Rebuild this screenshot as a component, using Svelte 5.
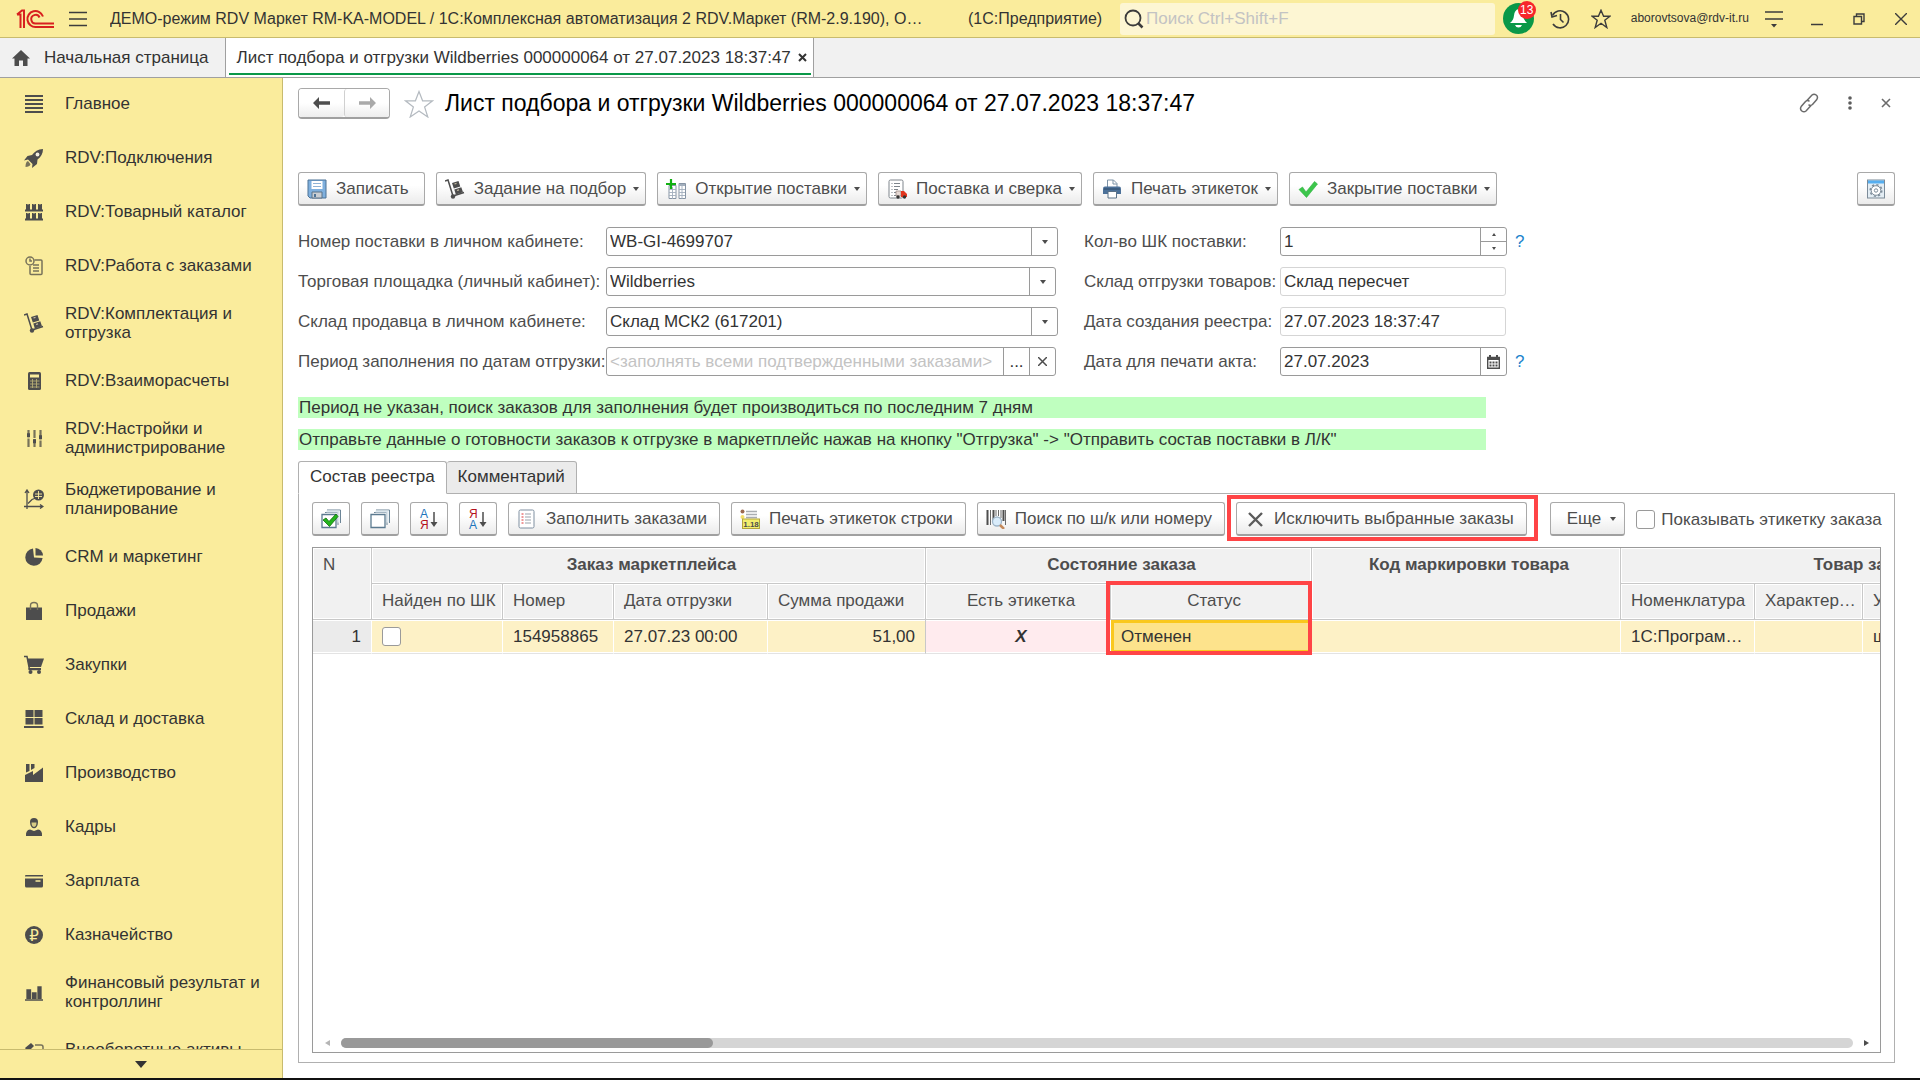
<script lang="ts">
  const sections = [
    { icon: 'lines', title: 'Главное' },
    { icon: 'rocket', title: 'RDV:Подключения' },
    { icon: 'catalog', title: 'RDV:Товарный каталог' },
    { icon: 'orders', title: 'RDV:Работа с заказами' },
    { icon: 'trolley', title: 'RDV:Комплектация и отгрузка' },
    { icon: 'calc', title: 'RDV:Взаиморасчеты' },
    { icon: 'sliders', title: 'RDV:Настройки и администрирование' },
    { icon: 'budget', title: 'Бюджетирование и планирование' },
    { icon: 'pie', title: 'CRM и маркетинг' },
    { icon: 'bag', title: 'Продажи' },
    { icon: 'basket', title: 'Закупки' },
    { icon: 'boxes', title: 'Склад и доставка' },
    { icon: 'factory', title: 'Производство' },
    { icon: 'person', title: 'Кадры' },
    { icon: 'wallet', title: 'Зарплата' },
    { icon: 'ruble', title: 'Казначейство' },
    { icon: 'bars', title: 'Финансовый результат и контроллинг' },
    { icon: 'assets', title: 'Внеоборотные активы' },
  ]

  const commands = [
    { icon: 'save', title: 'Записать', menu: false },
    { icon: 'trolley', title: 'Задание на подбор', menu: true },
    { icon: 'open', title: 'Открытие поставки', menu: true },
    { icon: 'delivery', title: 'Поставка и сверка', menu: true },
    { icon: 'printer', title: 'Печать этикеток', menu: true },
    { icon: 'check', title: 'Закрытие поставки', menu: true },
  ]

  const listTools = [
    { icon: 'checkAll', title: 'Установить флажки' },
    { icon: 'uncheckAll', title: 'Снять флажки' },
    { icon: 'sortAsc', title: 'Сортировать по возрастанию' },
    { icon: 'sortDesc', title: 'Сортировать по убыванию' },
  ]

  const listCommands = [
    { icon: 'fill', title: 'Заполнить заказами' },
    { icon: 'label', title: 'Печать этикеток строки' },
    { icon: 'barcode', title: 'Поиск по ш/к или номеру' },
  ]

  // All icons share a 20x20 canvas
  const icons: Record<string, string> = {
    lines: '<path d="M1 2h18M1 6h18M1 10h18M1 14h18M1 18h18" stroke="#4d4d4d" stroke-width="1.800"/>',
    rocket:
      '<path d="M19 1c-5 .3-8.500 2.500-11 6L3.500 8 0 12.500l4-1 4.500 4.500-.500 4 5-4 .5-4.500C17 9 19 5.500 19 1z" fill="#4d4d4d"/><circle cx="13.500" cy="6.500" r="1.900" fill="#f4efe0"/><path d="M4 13c-2 .8-2.500 3-2.500 6 2.600-.3 4.500-1 5-2.800z" fill="#77725a"/>',
    catalog:
      '<path d="M2 2h4v6H2zM8 2h4v6H8zM14 2h4v6h-4zM2 11h4v6H2zM8 11h4v6H8zM14 11h4v6h-4z" fill="#4d4d4d"/><path d="M1 8.500h18M1 17.500h18" stroke="#4d4d4d" stroke-width="1.800"/><path d="M3.500 2.500h1M9.500 2.500h1M15.500 2.500h1M3.500 11.500h1M9.500 11.500h1M15.500 11.500h1" stroke="#c4ba80"/>',
    orders:
      '<g fill="none" stroke="#77725a" stroke-width="1.500"><path d="M10.500 4H17q1 0 1 1v12.500q0 1-1 1H7q-1 0-1-1V10"/><circle cx="6" cy="5" r="4"/><path d="M6 2.500V5H8M9 9h6M9 12h6M9 15h6"/></g>',
    trolley:
      '<path d="M0 2l3-1 5 16 11-3.500" fill="none" stroke="#4d4d4d" stroke-width="1.500"/><circle cx="8" cy="17.500" r="2.200" fill="#4d4d4d"/><path d="M7 4l6.500-2 1.800 5.500-6.500 2zM9.300 10.500l7-2.200 1.700 5-7.200 2.300z" fill="#4d4d4d"/><path d="M9.500 5l2-.6M12 11.500l2-.6" stroke="#c4baa0" stroke-width="1.300"/>',
    calc:
      '<rect x="4" y="1" width="13" height="18" rx="1.500" fill="#4d4d4d"/><path d="M6 3.500h9v3H6z" fill="#faec9c"/><path d="M6 10h9.500M6 13h9.500M6 16h9.500M8.500 8v9M12.500 8v9" stroke="#b5ab74" stroke-width=".9"/>',
    sliders:
      '<path d="M4.500 2v17M10.500 2v17M16.500 2v17" stroke="#77725a" stroke-width="2.200"/><path d="M3 6.500h3M9 12.500h3M15 8.500h3M3 8h3M9 14h3M15 10h3" stroke="#4d4d4d" stroke-width="2.500"/><path d="M3 10h3M9 10.500h3M15 12h3" stroke="#faec9c"/>',
    budget:
      '<path d="M3 20V2M1 4l2-3 2 3M0 17.500h18M16 15.500l3 2-3 2" fill="none" stroke="#4d4d4d" stroke-width="1.300"/><path d="M4 14.500l4-4 5-2" fill="none" stroke="#4d4d4d" stroke-width="1.300"/><circle cx="14.500" cy="6" r="5.500" fill="#4d4d4d"/><path d="M14.500 2v8M11 5h7M11 7.500h7" stroke="#faec9c" stroke-width=".9"/>',
    pie: '<path d="M9 1.500a8.700 8.700 0 1 0 9.600 9.600L10 10.500z" fill="#4d4d4d"/><path d="M11.500 1v7.500H19A8 8 0 0 0 11.500 1z" fill="#4d4d4d"/>',
    bag: '<path d="M2 6.500h16V19H2z" fill="#4d4d4d"/><path d="M6.500 9V4.500q0-3 3.500-3t3.500 3V9" fill="none" stroke="#77725a" stroke-width="1.400"/>',
    basket:
      '<path d="M0 1.500h3L5.500 14.500h11" fill="none" stroke="#4d4d4d" stroke-width="1.500"/><path d="M3 3.500h17l-3 8.500H5z" fill="#4d4d4d"/><path d="M4.500 14h12.500" stroke="#4d4d4d" stroke-width="2"/><circle cx="6.500" cy="17" r="2" fill="#4d4d4d"/><circle cx="15" cy="17" r="2" fill="#4d4d4d"/>',
    boxes:
      '<path d="M1.500 1h8v7h-8zM10.500 1h8v7h-8zM1.500 9h8v6.500h-8zM10.500 9h8v6.500h-8zM0 17h19.500v2H0z" fill="#4d4d4d"/>',
    factory:
      '<path d="M1 19V12l8-4v4l10-7.500V19z" fill="#4d4d4d"/><path d="M2 1h3.500v7L2 9.500zM7 1h3.500v4L7 7z" fill="#4d4d4d"/>',
    person:
      '<path d="M6 5q0-4 4-4t4 4q0 3-1.500 5-1 1.300-2.500 1.300T7.500 10Q6 8 6 5z" fill="#4d4d4d"/><path d="M7.500 5.500h5q0 4-2.500 4.500-2.500-.5-2.500-4.500z" fill="#d8cc86"/><path d="M2 19q-.5-6 4-6.500L10 14l4-1.500q4.500.5 4 6.500z" fill="#4d4d4d"/>',
    wallet:
      '<path d="M1 5q0-1 1-1h17v1.500H1zM1 7.500h18V15q0 1.500-1.500 1.500h-15Q1 16.500 1 15z" fill="#4d4d4d"/><path d="M11.500 10h5" stroke="#faec9c" stroke-width="1.500"/>',
    ruble:
      '<circle cx="10" cy="10" r="9" fill="#4d4d4d"/><text x="10" y="15.500" text-anchor="middle" font-family="DejaVu Sans" font-size="15" fill="#faec9c">₽</text>',
    bars: '<path d="M1 18h18M3 17V8h3.500v9M8.500 17v-6H12v6M14 17V5h3v12" fill="#4d4d4d" stroke="#4d4d4d" stroke-width="1.300"/>',
    assets:
      '<path d="M1 8l6-5 3 3-6 6z" fill="#4d4d4d"/><path d="M11 5h6q2 0 2 2v10H9v-8" fill="none" stroke="#77725a" stroke-width="1.500"/>',
    save: '<path d="M1 1h18v18H3l-2-2z" fill="#7fb0de" stroke="#4d7396"/><path d="M4.500 2h11v8h-11z" fill="#fff"/><path d="M6 4.500h8M6 7.500h8" stroke="#8fb3d6" stroke-width="1"/><path d="M5 13h10v6H5z" fill="#c9ced3" stroke="#5b7288"/><path d="M7 15h2v3H7z" fill="#4d7396"/>',
    open: '<g fill="#fff" stroke="#8795a5"><path d="M3 6.500h7v13H3zM13 4.500h6.500v15H13z"/></g><path d="M3 10.500h7M3 13.500h7M3 16.500h7M13 10.500h6M13 13.500h6M13 16.500h6M6.500 8v12M16 7v13" stroke="#a3afbd" stroke-width=".9" fill="none"/><path d="M13 5h6v2h-6z" fill="#a3afbd"/><path d="M5 0v10M0 5h10" stroke="#12b012" stroke-width="2.200"/>',
    delivery:
      '<rect x="2" y="1" width="14" height="18" rx="1.500" fill="#fff" stroke="#7e858c"/><path d="M4.500 4.500h1M7 4.500h6M4.500 7.500h1M7 7.500h6M4.500 10.500h1M7 10.500h4M4.500 13.500h1M7 13.500h2M4.500 16.500h1M7 16.500h2" stroke="#7e858c"/><path d="M9 12h5v5H9z" fill="#e6d9d4" stroke="#93827c" stroke-width=".7"/><path d="M14 12h3l3 3v3h-6z" fill="#e2351e"/><circle cx="11" cy="18" r="1.700" fill="#333"/><circle cx="17.500" cy="18" r="1.700" fill="#333"/>',
    printer:
      '<path d="M5.500 9V1h6l3.500 3.500V9" fill="#fff" stroke="#7d92a6"/><path d="M11 1v4h4" fill="none" stroke="#7d92a6"/><path d="M3 7.500h14q2 0 2 2V15H1V9.500q0-2 2-2z" fill="#4c7199"/><path d="M2 10h16" stroke="#2c4a69"/><path d="M6 12.500h8.500V19H6z" fill="#fff" stroke="#5b7288"/>',
    check: '<path d="M1 10.500L4.500 8l3.500 5L16.500 2.500 19.500 5 8.500 18.500z" fill="#3cc64b" stroke="#2fb141" stroke-width=".6"/>',
    form: '<rect x="1.500" y="1" width="17" height="18" fill="#e3edf4" stroke="#7c8b98"/><path d="M2 1.500h16v3H2z" fill="#55aef0"/><circle cx="10" cy="11.500" r="5.800" fill="none" stroke="#7c8b98" stroke-width="1.500" stroke-dasharray="2.200 2.300"/><circle cx="10" cy="11.500" r="4.800" fill="#fff" stroke="#7c8b98"/><circle cx="10" cy="11.500" r="1.700" fill="none" stroke="#7c8b98"/>',
    checkAll:
      '<path d="M6 1h13.500v13M4 3.500h13V16" fill="none" stroke="#6c8597"/><path d="M5.500 1.500h13v12h-2v-10h-11z" fill="#dbe5ec"/><path d="M1 5.500h14v13H1z" fill="#fff" stroke="#5b7a90" stroke-width="1.300"/><path d="M2 11l3-2 3 3.500L15 5l2 2.500-8.500 10z" fill="#23b51c" stroke="#0e6b0c" stroke-width=".8"/>',
    uncheckAll:
      '<path d="M6 1h13.500v13M4 3.500h13V16" fill="none" stroke="#6c8597"/><path d="M5.500 1.500h13v12h-2v-10h-11z" fill="#dbe5ec"/><path d="M1 5.500h14v13H1z" fill="#fff" stroke="#5b7a90" stroke-width="1.300"/>',
    sortAsc:
      '<text x="1" y="9" font-family="Liberation Sans" font-size="12" fill="#1c75bc">А</text><text x="1" y="20" font-family="Liberation Sans" font-size="12" fill="#b5121b">Я</text><path d="M15 3v12" stroke="#4d4d4d" stroke-width="1.500"/><path d="M11.500 13h7L15 18z" fill="#4d4d4d"/>',
    sortDesc:
      '<text x="1" y="9" font-family="Liberation Sans" font-size="12" fill="#b5121b">Я</text><text x="1" y="20" font-family="Liberation Sans" font-size="12" fill="#1c75bc">А</text><path d="M15 3v12" stroke="#4d4d4d" stroke-width="1.500"/><path d="M11.500 13h7L15 18z" fill="#4d4d4d"/>',
    fill: '<rect x="2" y="1" width="15" height="18" rx="1.500" fill="#fff" stroke="#7e8fa0"/><path d="M4.500 5h2M4.500 8h2M4.500 11h2M4.500 14h2" stroke="#d33"/><path d="M8 5h6M8 8h6M8 11h6M8 14h6" stroke="#9aa3ab"/>',
    label:
      '<circle cx="2.500" cy="2.500" r="2" fill="#9c6a50"/><circle cx="2.500" cy="8" r="2" fill="#f5df6a"/><path d="M6 2.500h11M6 5.500h11M6 8.500h11" stroke="#a9adb1" stroke-width="1.400"/><rect x="2.500" y="10" width="17" height="9.500" fill="#f2ee6e" stroke="#b3a53c"/><text x="11" y="18" text-anchor="middle" font-family="Liberation Sans" font-weight="bold" font-size="8" fill="#4d4d4d">1.18</text>',
    barcode:
      '<path d="M1.500 1v15M7.500 1v11M17.500 1v11" stroke="#4d4d4d" stroke-width="2"/><path d="M4.500 1v15M10 1v6M12.500 1v6M15 1v8M19.500 1v15" stroke="#6b6b6b" stroke-width="1"/><circle cx="11" cy="12.500" r="4.500" fill="#d9ecfb" stroke="#9fb6c9" stroke-width="1.300"/><path d="M14 16l4 4" stroke="#c58a5b" stroke-width="2.500"/>',
    cross: '<path d="M4 4l13 13M17 4L4 17" stroke="#5c5c5c" stroke-width="2.400"/>',
  }

  let supply = $state('WB-GI-4699707')
  let market = $state('Wildberries')
  let warehouse = $state('Склад МСК2 (617201)')
  let period = $state('')
  let count = $state('1')
  let actDate = $state('27.07.2023')
  let found = $state(false)
  let showLabel = $state(false)
</script>

{#snippet icon(name: string)}
  <svg class="icon" viewBox="0 0 20 20" width="20" height="20" aria-hidden="true">{@html icons[name]}</svg>
{/snippet}

<div class="app">
  <header class="titlebar">
    <svg class="logo" viewBox="0 0 38 20" width="38" height="20" fill="none" stroke="#d8201f" stroke-width="2" aria-hidden="true">
      <path d="M1 5.500h3.500V19M1 5.500L6 1.500h2V19" />
      <path d="M27 7.500A8 8 0 1 0 20 18h18" />
      <path d="M23.500 8.500A4.300 4.300 0 1 0 20 14.500h18" />
    </svg>
    <button class="flat" aria-label="Главное меню">
      <svg width="18" height="16" viewBox="0 0 18 16" stroke="#3c3c3c" stroke-width="1.500"><path d="M0 1.500h18M0 8h18M0 14.500h18" /></svg>
    </button>
    <span class="app-title">ДЕМО-режим RDV Маркет RM-KA-MODEL / 1С:Комплексная автоматизация 2 RDV.Маркет (RM-2.9.190), О…</span>
    <span class="platform">(1С:Предприятие)</span>
    <label class="search">
      <svg width="20" height="20" viewBox="0 0 20 20" fill="none" stroke="#3c3c3c" stroke-width="1.800" aria-hidden="true"><circle cx="9" cy="9" r="7.500" /><path d="M14.500 14.500l4 4" stroke-width="2.500" /></svg>
      <input type="search" placeholder="Поиск Ctrl+Shift+F" aria-label="Поиск" />
    </label>
    <button class="flat bell" aria-label="Уведомления">
      <svg width="31" height="31" viewBox="0 0 31 31" aria-hidden="true">
        <circle cx="15.500" cy="15.500" r="15.500" fill="#0a9848" />
        <path d="M15.500 6q-4 1-4.500 6.500-.4 4.500-4 7.500h17q-3.600-3-4-7.500Q19.500 7 15.500 6z" fill="#fff" />
        <path d="M12 22h7q-1 2.500-3.500 2.500T12 22z" fill="#fff" />
      </svg>
      <span class="badge">13</span>
    </button>
    <button class="flat history" aria-label="История">
      <svg width="20" height="20" viewBox="0 0 20 20" fill="none" stroke="#3c3c3c" stroke-width="1.600"><path d="M2.500 6.500A8.500 8.500 0 1 1 3 15" /><path d="M1 3l1 5 5-1.500M10.500 5v5.500l3 3" /></svg>
    </button>
    <button class="flat favorites" aria-label="Избранное">
      <svg width="20" height="20" viewBox="0 0 20 20" fill="none" stroke="#3c3c3c" stroke-width="1.400"><path d="M10 1.200l2.600 6H19l-5.200 4.100 2 7.200L10 14.300l-5.800 4.200 2-7.200L1 7.200h6.400z" /></svg>
    </button>
    <span class="user">aborovtsova@rdv-it.ru</span>
    <button class="flat" aria-label="Настройки">
      <svg width="18" height="18" viewBox="0 0 18 18" stroke="#3c3c3c" stroke-width="1.500"><path d="M0 2h18M0 9h18" /><path d="M6 14h6l-3 3.500z" fill="#3c3c3c" stroke="none" /></svg>
    </button>
    <div class="window-buttons">
      <button class="flat" aria-label="Свернуть"><svg width="12" height="14" viewBox="0 0 12 14" stroke="#3c3c3c" stroke-width="1.500"><path d="M0 12.500h12" /></svg></button>
      <button class="flat" aria-label="Восстановить"><svg width="12" height="12" viewBox="0 0 12 12" fill="none" stroke="#3c3c3c" stroke-width="1.400"><path d="M1 3.500h7.500V11H1zM3.500 3V1H11v7.500H9" /></svg></button>
      <button class="flat" aria-label="Закрыть"><svg width="12" height="12" viewBox="0 0 12 12" stroke="#3c3c3c" stroke-width="1.400"><path d="M0 0l12 12M12 0L0 12" /></svg></button>
    </div>
  </header>

  <nav class="tabs" aria-label="Открытые окна">
    <a class="tab home" href="#home">
      <svg width="18" height="16" viewBox="0 0 18 16" fill="#4d4d4d" aria-hidden="true"><path d="M9 0L0 8.500h2.500V16H7v-5.500h4V16h4.500V8.500H18z" /></svg>
      Начальная страница
    </a>
    <div class="tab current">
      <a href="#list">Лист подбора и отгрузки Wildberries 000000064 от 27.07.2023 18:37:47</a>
      <button class="flat" aria-label="Закрыть вкладку"><svg width="9" height="9" viewBox="0 0 9 9" stroke="#333" stroke-width="2"><path d="M1 1l7 7M8 1L1 8" /></svg></button>
    </div>
  </nav>

  <div class="body">
    <aside class="sidebar">
      <ul>
        {#each sections as section}
          <li><a href="#section">{@render icon(section.icon)}<span>{section.title}</span></a></li>
        {/each}
      </ul>
      <button class="more" aria-label="Прокрутить вниз"><svg width="12" height="7" viewBox="0 0 12 7" fill="#333"><path d="M0 0h12L6 7z" /></svg></button>
    </aside>

    <main>
      <div class="heading">
        <div class="history-nav">
          <button aria-label="Назад"><svg width="17" height="12" viewBox="0 0 17 12" fill="#4d4d4d"><path d="M0 6l6-6v4.300h11v3.400H6V12z" /></svg></button>
          <button aria-label="Вперед"><svg width="17" height="12" viewBox="0 0 17 12" fill="#a9a9a9"><path d="M17 6l-6-6v4.300H0v3.400h11V12z" /></svg></button>
        </div>
        <button class="flat star" aria-label="Добавить в избранное">
          <svg width="30" height="28" viewBox="0 0 30 28" fill="#fff" stroke="#b4bac0" stroke-width="1.200"><path d="M15 1.500l3.600 9.300h10L20.600 17l3.200 10L15 21l-8.800 6 3.200-10-8-6.200h10z" /></svg>
        </button>
        <h1>Лист подбора и отгрузки Wildberries 000000064 от 27.07.2023 18:37:47</h1>
        <div class="heading-actions">
          <button class="flat" aria-label="Получить ссылку"><svg width="20" height="20" viewBox="0 0 20 20" fill="none" stroke="#6b6b6b" stroke-width="1.500"><path d="M8 7.500l5-5.500q2-1.700 4.200 0t.6 4.500l-4.300 5q-2 1.700-4 .2" /><path d="M12 12.500l-5 5.500q-2 1.700-4.200 0t-.6-4.500l4.300-5q2-1.700 4-.2" /></svg></button>
          <button class="flat dots" aria-label="Еще"><svg width="4" height="14" viewBox="0 0 4 14" fill="#5c5c5c"><circle cx="2" cy="2" r="1.800" /><circle cx="2" cy="7" r="1.800" /><circle cx="2" cy="12" r="1.800" /></svg></button>
          <button class="flat" aria-label="Закрыть"><svg width="10" height="10" viewBox="0 0 10 10" stroke="#6b6b6b" stroke-width="1.600"><path d="M1 1l8 8M9 1L1 9" /></svg></button>
        </div>
      </div>

      <div class="toolbar">
        {#each commands as command}
          <button class="btn">
            {@render icon(command.icon)}
            <span>{command.title}</span>
            {#if command.menu}<i class="caret"></i>{/if}
          </button>
        {/each}
        <button class="btn square last" aria-label="Настройка формы">{@render icon('form')}</button>
      </div>

      <form class="fields">
        <label for="supply">Номер поставки в личном кабинете:</label>
        <div class="field">
          <select id="supply" bind:value={supply}><option>WB-GI-4699707</option></select>
          <span class="part"><i class="caret"></i></span>
        </div>
        <label for="count">Кол-во ШК поставки:</label>
        <div class="field">
          <input id="count" type="text" inputmode="numeric" bind:value={count} />
          <span class="spin">
            <button type="button" aria-label="Увеличить" onclick={() => (count = String(+count + 1))}><i class="caret up"></i></button>
            <button type="button" aria-label="Уменьшить" onclick={() => (count = String(+count - 1))}><i class="caret"></i></button>
          </span>
        </div>
        <a class="help" href="#help">?</a>

        <label for="market">Торговая площадка (личный кабинет):</label>
        <div class="field short">
          <select id="market" bind:value={market}><option>Wildberries</option></select>
          <span class="part"><i class="caret"></i></span>
        </div>
        <label for="stock">Склад отгрузки товаров:</label>
        <div class="field readonly"><input id="stock" type="text" value="Склад пересчет" readonly /></div>
        <span></span>

        <label for="warehouse">Склад продавца в личном кабинете:</label>
        <div class="field">
          <select id="warehouse" bind:value={warehouse}><option>Склад МСК2 (617201)</option></select>
          <span class="part"><i class="caret"></i></span>
        </div>
        <label for="created">Дата создания реестра:</label>
        <div class="field readonly"><input id="created" type="text" value="27.07.2023 18:37:47" readonly /></div>
        <span></span>

        <label for="period">Период заполнения по датам отгрузки:</label>
        <div class="field short">
          <input id="period" type="text" placeholder="<заполнять всеми подтвержденными заказами>" bind:value={period} />
          <button type="button" class="part" aria-label="Выбрать">...</button>
          <button type="button" class="part" aria-label="Очистить" onclick={() => (period = '')}>
            <svg width="9" height="9" viewBox="0 0 9 9" stroke="#4d4d4d" stroke-width="1.500"><path d="M0 0l9 9M9 0L0 9" /></svg>
          </button>
        </div>
        <label for="act-date">Дата для печати акта:</label>
        <div class="field">
          <input id="act-date" type="text" bind:value={actDate} />
          <button type="button" class="part" aria-label="Выбрать дату">
            <svg width="13" height="14" viewBox="0 0 13 14"><path d="M.7 2.500h11.600v10.800H.7z" fill="none" stroke="#4d4d4d" stroke-width="1.400" /><path d="M0 2h13v3H0zM2 0h2v3H2zM9 0h2v3H9z" fill="#4d4d4d" /><path d="M2.500 7.500h8M2.500 10.500h8" stroke="#4d4d4d" stroke-width="1.800" stroke-dasharray="2 1" /></svg>
          </button>
        </div>
        <a class="help" href="#help">?</a>
      </form>

      <div class="notes">
        <p>Период не указан, поиск заказов для заполнения будет производиться по последним 7 дням</p>
        <p>Отправьте данные о готовности заказов к отгрузке в маркетплейс нажав на кнопку "Отгрузка" -&gt; "Отправить состав поставки в Л/К"</p>
      </div>

      <div class="pages" role="tablist">
        <button class="page active" role="tab" aria-selected="true">Состав реестра</button>
        <button class="page" role="tab" aria-selected="false">Комментарий</button>
      </div>

      <section class="panel">
        <div class="toolbar list">
          {#each listTools as tool}
            <button class="btn square" aria-label={tool.title}>{@render icon(tool.icon)}</button>
          {/each}
          {#each listCommands as command}
            <button class="btn">{@render icon(command.icon)}<span>{command.title}</span></button>
          {/each}
          <div class="marked">
            <button class="btn">{@render icon('cross')}<span>Исключить выбранные заказы</span></button>
          </div>
          <button class="btn else"><span>Еще</span><i class="caret"></i></button>
          <label class="check"><input type="checkbox" bind:checked={showLabel} />Показывать этикетку заказа</label>
        </div>

        <div class="grid">
          <div class="rows">
            <table>
              <colgroup>
                <col style:width="59px" />
                <col style:width="131px" />
                <col style:width="111px" />
                <col style:width="154px" />
                <col style:width="158px" />
                <col style:width="185px" />
                <col style:width="201px" />
                <col style:width="309px" />
                <col style:width="134px" />
                <col style:width="108px" />
                <col style:width="246px" />
              </colgroup>
              <thead>
                <tr>
                  <th class="top" rowspan="2">N</th>
                  <th class="group" colspan="4">Заказ маркетплейса</th>
                  <th class="group" colspan="2">Состояние заказа</th>
                  <th class="group top" rowspan="2">Код маркировки товара</th>
                  <th class="group" colspan="3">Товар заказа</th>
                </tr>
                <tr>
                  <th>Найден по ШК</th>
                  <th>Номер</th>
                  <th>Дата отгрузки</th>
                  <th>Сумма продажи</th>
                  <th class="center">Есть этикетка</th>
                  <th class="center status">Статус</th>
                  <th>Номенклатура</th>
                  <th>Характер…</th>
                  <th>Упаковка</th>
                </tr>
              </thead>
              <tbody>
                <tr>
                  <td class="number">1</td>
                  <td><input type="checkbox" bind:checked={found} aria-label="Найден по ШК" /></td>
                  <td>154958865</td>
                  <td>27.07.23 00:00</td>
                  <td class="sum">51,00</td>
                  <td class="missing">X</td>
                  <td class="selected">Отменен</td>
                  <td></td>
                  <td>1С:Програм…</td>
                  <td></td>
                  <td>шт</td>
                </tr>
              </tbody>
            </table>
          </div>
          <div class="scroll">
            <svg width="5" height="6" viewBox="0 0 5 6" fill="#b5b5b5" aria-hidden="true"><path d="M5 0v6L0 3z" /></svg>
            <div class="track"><div class="thumb"></div></div>
            <svg width="5" height="6" viewBox="0 0 5 6" fill="#4d4d4d" aria-hidden="true"><path d="M0 0v6l5-3z" /></svg>
          </div>
        </div>
      </section>
    </main>
  </div>
  <footer></footer>
</div>

<style>
  :global(body) {
    margin: 0;
  }

  .app {
    background: #fff;
    color: #333;
    display: flex;
    flex-direction: column;
    font: 17px/19px 'Liberation Sans', Arial, sans-serif;
    height: 100vh;
    overflow: hidden;
  }

  .app *,
  .app *::after {
    box-sizing: border-box;
  }

  button,
  input,
  select {
    color: inherit;
    font: inherit;
    margin: 0;
  }

  button {
    cursor: pointer;
  }

  a {
    color: inherit;
    text-decoration: none;
  }

  svg {
    display: block;
    flex: none;
  }

  .flat {
    background: none;
    border: none;
    flex: none;
    padding: 0;
  }

  .titlebar {
    align-items: center;
    background: #faec9c;
    border-bottom: 1px solid #c8bb6e;
    display: flex;
    flex: none;
    height: 38px;
    padding: 0 13px 0 16px;
  }

  .logo {
    margin-right: 15px;
  }

  .app-title,
  .platform {
    font-size: 16px;
    white-space: nowrap;
  }

  .app-title {
    flex: 0 1 838px;
    margin-left: 23px;
    overflow: hidden;
    text-overflow: ellipsis;
  }

  .platform {
    flex: 0 0 140px;
    margin: 0 12px 0 20px;
  }

  .search {
    align-items: center;
    background: #fdf6d3;
    border-radius: 3px;
    display: flex;
    flex: 1;
    height: 32px;
    padding: 0 4px;
  }

  .search input {
    background: none;
    border: none;
    flex: 1;
    min-width: 0;
    outline: none;
    padding: 0 2px;
  }

  .search input::placeholder,
  .field input::placeholder {
    color: #c3c3c3;
    opacity: 1;
  }

  .bell {
    margin-left: 8px;
    position: relative;
  }

  .badge {
    background: #f7262b;
    border-radius: 9px;
    color: #fff;
    font-size: 12px;
    height: 18px;
    line-height: 18px;
    position: absolute;
    right: -2px;
    text-align: center;
    top: -2px;
    width: 18px;
  }

  .history {
    margin-left: 16px;
  }

  .favorites {
    margin-left: 21px;
  }

  .user {
    font-size: 12px;
    margin: 0 16px 0 20px;
  }

  .window-buttons {
    align-items: center;
    display: flex;
    gap: 30px;
    margin-left: 28px;
  }

  .tabs {
    background: #f1f1f1;
    border-bottom: 1px solid #a0a0a0;
    display: flex;
    flex: none;
    height: 40px;
  }

  .tab {
    align-items: center;
    border-right: 1px solid #a0a0a0;
    display: flex;
    white-space: nowrap;
  }

  .home {
    gap: 14px;
    padding: 0 16px 0 12px;
  }

  .current {
    background: #fff;
    gap: 7px;
    padding: 0 6px 0 11px;
    position: relative;
  }

  .current::after {
    background: #0a9848;
    bottom: 2px;
    content: '';
    height: 2px;
    left: 3px;
    position: absolute;
    right: 2px;
  }

  .body {
    display: flex;
    flex: 1;
    min-height: 0;
  }

  .sidebar {
    background: #faec9c;
    border-right: 1px solid #c8bb6e;
    display: flex;
    flex: none;
    flex-direction: column;
    width: 283px;
  }

  .sidebar ul {
    flex: 1;
    list-style: none;
    margin: 0;
    min-height: 0;
    overflow: hidden;
    padding: 0;
  }

  .sidebar a {
    align-items: center;
    display: flex;
    gap: 21px;
    min-height: 54px;
    padding: 10px 16px 13px 24px;
  }

  .more {
    align-items: center;
    background: none;
    border: none;
    border-top: 1px solid #c8bb6e;
    display: flex;
    flex: none;
    height: 29px;
    justify-content: center;
  }

  main {
    display: flex;
    flex: 1;
    flex-direction: column;
    min-width: 0;
    padding: 10px 25px 15px 15px;
  }

  .heading {
    align-items: center;
    display: flex;
    height: 31px;
  }

  .history-nav {
    border: 1px solid #a9a9a9;
    border-bottom: 2px solid #a0a0a0;
    border-radius: 4px;
    display: flex;
    height: 31px;
  }

  .history-nav button {
    align-items: center;
    background: linear-gradient(#fff 50%, #ededed);
    border: none;
    border-radius: 3px;
    display: flex;
    justify-content: center;
    padding: 0;
    width: 45px;
  }

  .history-nav button + button {
    border-left: 1px solid #d0d0d0;
  }

  .star {
    margin: 0 11px 0 14px;
  }

  h1 {
    color: #000;
    flex: 1;
    font-size: 23px;
    font-weight: normal;
    line-height: 28px;
    margin: 0;
    padding-bottom: 2px;
    white-space: nowrap;
  }

  .heading-actions {
    align-items: center;
    display: flex;
    gap: 27px;
    padding: 0 4px 2px 0;
  }

  .dots {
    padding: 0 2px;
  }

  .toolbar {
    display: flex;
    gap: 11px;
    margin-top: 53px;
  }

  .btn {
    align-items: center;
    background: linear-gradient(#fff 40%, #ebebeb);
    border: 1px solid #a9a9a9;
    border-bottom: 2px solid #a0a0a0;
    border-radius: 3px;
    color: #4d4d4d;
    display: flex;
    flex: none;
    height: 34px;
    padding: 0 15px 0 8px;
    white-space: nowrap;
  }

  .btn span {
    margin-left: 9px;
  }

  .btn:has(.caret) {
    padding-right: 6px;
  }

  .btn .caret {
    margin-left: 7px;
  }

  .list .btn {
    padding-right: 12px;
  }

  .toolbar .square {
    justify-content: center;
    padding: 0;
    width: 38px;
  }

  .last {
    margin-left: auto;
  }

  .caret {
    border: 3px solid transparent;
    border-bottom: none;
    border-top: 4px solid #4d4d4d;
    flex: none;
    height: 0;
    width: 0;
  }

  .caret.up {
    border-bottom: 4px solid #4d4d4d;
    border-top: none;
  }

  .fields {
    align-items: center;
    color: #4d4d4d;
    display: grid;
    gap: 11px 0;
    grid-template-columns: 308px minmax(200px, 452px) 222px 227px 1fr;
    margin-top: 21px;
    white-space: nowrap;
  }

  .fields > label:nth-of-type(even) {
    padding-left: 26px;
  }

  .field {
    background: #fff;
    border: 1px solid #9a9a9a;
    border-radius: 3px;
    color: #333;
    display: flex;
    height: 29px;
    position: relative;
  }

  .short {
    margin-right: 2px;
  }

  .readonly {
    border-color: #d5d5d5;
    margin-right: 1px;
  }

  .field > input,
  .field > select {
    appearance: none;
    background: none;
    border: none;
    flex: 1;
    min-width: 0;
    outline: none;
    padding: 0 3px;
  }

  .part {
    align-items: center;
    background: none;
    border: none;
    border-left: 1px solid #9a9a9a;
    display: flex;
    flex: none;
    justify-content: center;
    padding: 0;
    pointer-events: none;
    width: 26px;
  }

  button.part {
    pointer-events: auto;
  }

  .spin {
    border-left: 1px solid #9a9a9a;
    display: flex;
    flex-direction: column;
    width: 26px;
  }

  .spin button {
    align-items: center;
    background: none;
    border: none;
    display: flex;
    flex: 1;
    justify-content: center;
    padding: 0;
  }

  .spin button + button {
    border-top: 1px solid #9a9a9a;
  }

  .spin .caret {
    border-left-width: 2px;
    border-right-width: 2px;
    border-top-width: 3px;
  }

  .spin .up {
    border-bottom-width: 3px;
    border-top-width: 0;
  }

  .help {
    color: #1c84cc;
    padding-left: 8px;
  }

  .notes {
    display: grid;
    gap: 11px;
    margin: 21px 409px 0 0;
  }

  .notes p {
    background: #bfffbf;
    line-height: 21px;
    margin: 0;
    padding-left: 1px;
    white-space: nowrap;
  }

  .pages {
    display: flex;
    margin: 11px 0 -1px;
    position: relative;
  }

  .page {
    background: #ebebeb;
    border: 1px solid #b0b0b0;
    border-left: none;
    border-radius: 3px 3px 0 0;
    height: 33px;
    padding: 0 11px 2px;
  }

  .page.active {
    background: #fff;
    border-bottom-color: #fff;
    border-left: 1px solid #b0b0b0;
  }

  .panel {
    border: 1px solid #b0b0b0;
    display: flex;
    flex: 1;
    flex-direction: column;
    min-height: 0;
    padding: 8px 13px 9px;
  }

  .list {
    margin: 0;
  }

  .marked {
    position: relative;
  }

  .marked::after {
    border: 4px solid #ff4446;
    content: '';
    inset: -7px -11px -5px -9px;
    pointer-events: none;
    position: absolute;
  }

  .list .else {
    margin-left: 12px;
    padding-right: 8px;
  }

  .else span {
    margin: 0 2px 0 8px;
  }

  .check {
    align-items: center;
    color: #4d4d4d;
    display: flex;
    gap: 6px;
    margin-left: auto;
    white-space: nowrap;
  }

  input[type='checkbox'] {
    appearance: none;
    background: #fff;
    border: 1px solid #9a9a9a;
    border-radius: 3px;
    display: block;
    height: 19px;
    width: 19px;
  }

  input[type='checkbox']:checked {
    background: #0a9848;
  }

  .grid {
    border: 1px solid #9a9a9a;
    display: flex;
    flex: 1;
    flex-direction: column;
    margin-top: 11px;
    min-height: 0;
  }

  .rows {
    flex: 1;
    min-height: 0;
    overflow: hidden;
  }

  table {
    border-collapse: separate;
    border-spacing: 0;
    table-layout: fixed;
    width: 1796px;
  }

  th {
    background: #f1f1f1;
    border-bottom: 1px solid #c8c8c8;
    border-right: 1px solid #c8c8c8;
    box-shadow: inset 0 0 0 1px #fff;
    color: #4d4d4d;
    font-weight: normal;
    height: 36px;
    overflow: hidden;
    padding: 0 4px 2px 10px;
    text-align: left;
    white-space: nowrap;
  }

  th.top {
    padding-top: 7px;
    vertical-align: top;
  }

  th.group {
    font-weight: bold;
    text-align: center;
  }

  th.center {
    text-align: center;
  }

  th.status {
    overflow: visible;
    position: relative;
  }

  .status::after {
    border: 4px solid #ff4446;
    content: '';
    height: 74px;
    left: -5px;
    pointer-events: none;
    position: absolute;
    right: -1px;
    top: -3px;
  }

  td {
    background: #fdf1c6;
    border-bottom: 1px solid #e3e3e3;
    border-right: 1px solid #fff;
    box-shadow: inset 0 1px #fff, inset 0 -1px #fff;
    height: 34px;
    overflow: hidden;
    padding: 0 4px 0 10px;
    white-space: nowrap;
  }

  td.number {
    background: #ebebeb;
    padding-right: 10px;
    text-align: right;
  }

  td.sum {
    border-right-color: #c8c8c8;
    padding-right: 10px;
    text-align: right;
  }

  td.missing {
    background: #ffebee;
    font-style: italic;
    font-weight: bold;
    text-align: center;
  }

  td.selected {
    background: #fde38c;
    box-shadow: inset 0 0 0 3px #fac81e;
  }

  .scroll {
    align-items: center;
    display: flex;
    gap: 11px;
    height: 19px;
    justify-content: space-between;
    padding: 0 11px 0 12px;
  }

  .track {
    background: #d5d5d5;
    border-radius: 5px;
    flex: 1;
    height: 10px;
  }

  .thumb {
    background: #999;
    border-radius: 5px;
    height: 10px;
    width: 24.6%;
  }

  footer {
    background: #111;
    flex: none;
    height: 2px;
  }
</style>
